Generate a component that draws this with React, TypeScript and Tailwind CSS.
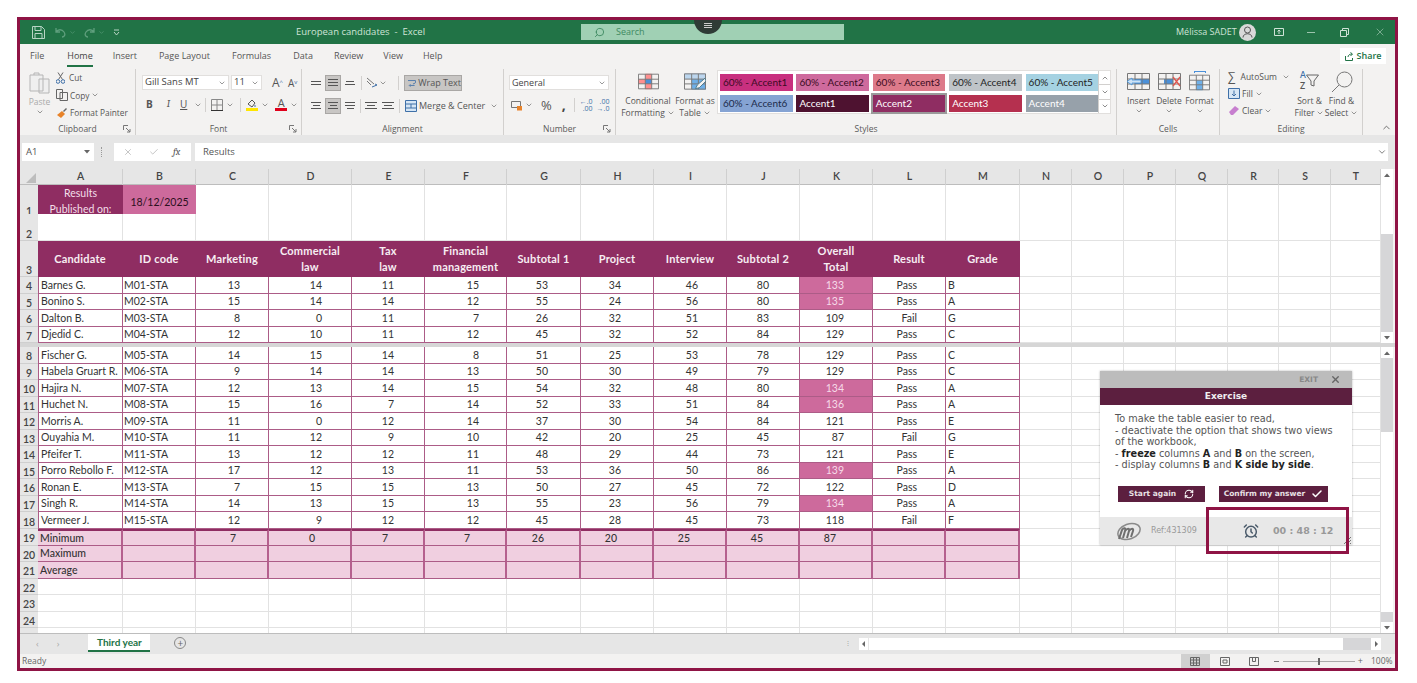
import { AlarmClock, Check, ChevronDown, ChevronUp, RefreshCw, Search, X } from 'lucide-react'
import type { ReactNode } from 'react'

const columns = ['A', 'B', 'C', 'D', 'E', 'F', 'G', 'H', 'I', 'J', 'K', 'L', 'M', 'N', 'O', 'P', 'Q', 'R', 'S', 'T']
const gridCols =
  'grid grid-cols-[18px_85px_73px_73px_83px_73px_82px_74px_73px_73px_73px_73px_73px_74px_52px_52px_52px_52px_51px_52px_50px]'

// right padding per score column, C to L
const scorePad = ['pr-[28px]', 'pr-[29px]', 'pr-[30px]', 'pr-[27px]', 'pr-[32px]', 'pr-[32px]', 'pr-[28px]', 'pr-[30px]', 'pr-[28px]', 'pr-[28px]']

const candidates: [string, string, number[], string, string][] = [
  ['Barnes G.', 'M01-STA', [13, 14, 11, 15, 53, 34, 46, 80, 133], 'Pass', 'B'],
  ['Bonino S.', 'M02-STA', [15, 14, 14, 12, 55, 24, 56, 80, 135], 'Pass', 'A'],
  ['Dalton B.', 'M03-STA', [8, 0, 11, 7, 26, 32, 51, 83, 109], 'Fail', 'G'],
  ['Djedid C.', 'M04-STA', [12, 10, 11, 12, 45, 32, 52, 84, 129], 'Pass', 'C'],
  ['Fischer G.', 'M05-STA', [14, 15, 14, 8, 51, 25, 53, 78, 129], 'Pass', 'C'],
  ['Habela Gruart R.', 'M06-STA', [9, 14, 14, 13, 50, 30, 49, 79, 129], 'Pass', 'C'],
  ['Hajira N.', 'M07-STA', [12, 13, 14, 15, 54, 32, 48, 80, 134], 'Pass', 'A'],
  ['Huchet N.', 'M08-STA', [15, 16, 7, 14, 52, 33, 51, 84, 136], 'Pass', 'A'],
  ['Morris A.', 'M09-STA', [11, 0, 12, 14, 37, 30, 54, 84, 121], 'Pass', 'E'],
  ['Ouyahia M.', 'M10-STA', [11, 12, 9, 10, 42, 20, 25, 45, 87], 'Fail', 'G'],
  ['Pfeifer T.', 'M11-STA', [13, 12, 12, 11, 48, 29, 44, 73, 121], 'Pass', 'E'],
  ['Porro Rebollo F.', 'M12-STA', [17, 12, 13, 11, 53, 36, 50, 86, 139], 'Pass', 'A'],
  ['Ronan E.', 'M13-STA', [7, 15, 15, 13, 50, 27, 45, 72, 122], 'Pass', 'D'],
  ['Singh R.', 'M14-STA', [14, 13, 15, 13, 55, 23, 56, 79, 134], 'Pass', 'A'],
  ['Vermeer J.', 'M15-STA', [12, 9, 12, 12, 45, 28, 45, 73, 118], 'Fail', 'F'],
]

const headers = ['Candidate', 'ID code', 'Marketing', 'Commercial\nlaw', 'Tax\nlaw', 'Financial\nmanagement', 'Subtotal 1', 'Project', 'Interview', 'Subtotal 2', 'Overall\nTotal', 'Result', 'Grade']
const minimums = [7, 0, 7, 7, 26, 20, 25, 45, 87]

const styleCells = [
  ['60% - Accent1', 'bg-[#c8307f] text-[#3a0b22]'],
  ['60% - Accent2', 'bg-[#ce6a9d] text-[#3a0b22]'],
  ['60% - Accent3', 'bg-[#dd7a8a] text-[#3a0b22]'],
  ['60% - Accent4', 'bg-[#bfc4c8] text-[#222]'],
  ['60% - Accent5', 'bg-[#a5d2e2] text-[#222]'],
  ['60% - Accent6', 'bg-[#85a3d3] text-[#1c2a4a]'],
  ['Accent1', 'bg-[#4e1230] text-white'],
  ['Accent2', 'bg-[#8f2d62] text-white outline-2 outline-[#9a9a9a]'],
  ['Accent3', 'bg-[#b5304f] text-white'],
  ['Accent4', 'bg-[#97a1aa] text-white'],
]

function Launcher() {
  return (
    <svg width="8" height="8" viewBox="0 0 8 8" className="absolute right-[4px] bottom-[2px]" fill="none" stroke="#777">
      <path d="M.5 5V.5H5M3 3l4 4M7 4v3H4" />
    </svg>
  )
}

function Group({ label, width, launcher, children }: { label: string; width: string; launcher?: boolean; children: ReactNode }) {
  return (
    <div className={`${width} relative flex flex-col border-r border-[#d2d0ce] h-[66px] mt-[1px]`}>
      <div className="flex-1 min-h-0">{children}</div>
      <div className="text-[8.500px] text-center text-[#5a5a5a] h-[13px] leading-[13px]">{label}</div>
      {launcher && <Launcher />}
    </div>
  )
}

function Lines({ widths, active }: { widths: number[]; active?: boolean }) {
  return (
    <div className={`w-[16px] h-[16px] flex flex-col justify-center items-center gap-[2px] ${active ? 'bg-[#c8c6c4] border border-[#a9a7a5]' : ''}`}>
      {widths.map((w, i) => (
        <div key={i} className="h-px bg-[#555]" style={{ width: w }} />
      ))}
    </div>
  )
}

function Caret() {
  return <ChevronDown size={8} strokeWidth={2} className="text-[#666]" />
}

function TableIcon({ fill, over, width = 23 }: { fill?: ReactNode; over?: ReactNode; width?: number }) {
  return (
    <svg width={width} height="17" viewBox="0 0 23 17" fill="none">
      {fill}
      <path d="M.5.5h22v16H.5zM.5 6h22M.5 11h22M8 .5v16M15 .5v16" stroke="#777" />
      {over}
    </svg>
  )
}

function BigButton({ icon, lines, width, caret }: { icon: ReactNode; lines: string[]; width: string; caret?: boolean }) {
  return (
    <div className={`${width} flex flex-col items-center text-[8.500px] leading-[12px] text-[#555]`}>
      <div className="h-[25px] flex items-start pt-[3px]">{icon}</div>
      {lines.map((l, i) => (
        <div key={l} className="flex items-center gap-[2px] whitespace-nowrap h-[12px]">
          {l}
          {caret && i === lines.length - 1 && <Caret />}
        </div>
      ))}
      {!caret && <Caret />}
    </div>
  )
}

function TitleBar() {
  return (
    <div className="h-[24px] bg-[#217346] flex items-center text-[#cfe3d7] relative shrink-0 text-[9px]">
      <svg width="13" height="13" viewBox="0 0 13 13" fill="none" stroke="#b9d5c5" className="ml-[12px]">
        <path d="M.5.5h9l3 3v9H.5zM3 .5v4h6v-4M3 12.5v-5h7v5" />
      </svg>
      <svg width="11" height="11" viewBox="0 0 11 11" fill="none" stroke="#5f9f7d" strokeWidth="1.3" className="ml-[10px]">
        <path d="M1 1v4h4M1 5c2-3 6-3 8 0s0 5-2 5" />
      </svg>
      <ChevronDown size={7} className="ml-[3px] text-[#5f9f7d]" />
      <svg width="11" height="11" viewBox="0 0 11 11" fill="none" stroke="#5f9f7d" strokeWidth="1.3" className="ml-[8px]">
        <path d="M10 1v4H6M10 5C8 2 4 2 2 5s0 5 2 5" />
      </svg>
      <ChevronDown size={7} className="ml-[3px] text-[#5f9f7d]" />
      <svg width="7" height="7" viewBox="0 0 7 7" fill="none" stroke="#b9d5c5" className="ml-[8px]">
        <path d="M1 1h5M1 3l2.500 3L6 3" />
      </svg>
      <div className="ml-[176px] w-[150px] text-[9.500px] whitespace-pre">European candidates  -  Excel</div>
      <div className="ml-[135px] w-[263px] h-[16px] bg-[#a0d0b4] flex items-center text-[#3f8a62] text-[9px]">
        <Search size={11} className="ml-[13px] -scale-x-100" />
        <span className="ml-[11px]">Search</span>
      </div>
      <div className="ml-[332px] w-[56px] whitespace-nowrap text-[9px]">Mélissa SADET</div>
      <div className="ml-[7px] w-[17px] h-[17px] rounded-full bg-[#d9d9d9] flex items-center justify-center">
        <svg width="11" height="12" viewBox="0 0 11 12" fill="none" stroke="#555">
          <circle cx="5.500" cy="4" r="3" />
          <path d="M1 11.500c0-5 9-5 9 0" />
        </svg>
      </div>
      <svg width="10" height="8" viewBox="0 0 10 8" fill="none" stroke="#cfe3d7" className="ml-[18px]">
        <path d="M.5.5h9v7h-9zM5 6V2M3.500 3.500 5 2l1.500 1.500" />
      </svg>
      <div className="ml-[23px] w-[8px] h-px bg-[#9cc4ad]" />
      <svg width="9" height="9" viewBox="0 0 9 9" fill="none" stroke="#cfe3d7" className="ml-[25px]">
        <path d="M.5 2.500h6v6h-6zM2.500 2.500v-2h6v6h-2" />
      </svg>
      <X size={12} strokeWidth={1} className="ml-[25px] text-[#cfe3d7]" />
    </div>
  )
}

function MenuTabs() {
  const tabs: [string, string][] = [
    ['File', 'ml-[10px]'],
    ['Home', 'ml-[23px]'],
    ['Insert', 'ml-[20px]'],
    ['Page Layout', 'ml-[22px]'],
    ['Formulas', 'ml-[22px]'],
    ['Data', 'ml-[22px]'],
    ['Review', 'ml-[21px]'],
    ['View', 'ml-[20px]'],
    ['Help', 'ml-[20px]'],
  ]
  return (
    <div className="h-[24px] bg-[#f3f2f1] flex items-center text-[9px] text-[#555] shrink-0">
      {tabs.map(([t, m]) =>
        t === 'Home' ? (
          <div key={t} className={`${m} text-[#444] relative font-medium`}>
            {t}
            <div className="absolute left-0 right-0 -bottom-[4px] h-[2px] bg-[#217346]" />
          </div>
        ) : (
          <div key={t} className={m}>
            {t}
          </div>
        ),
      )}
      <div className="ml-auto mr-[9px] w-[46px] h-[16px] bg-white flex items-center justify-center gap-[3px] text-[#217346] font-semibold">
        <svg width="9" height="9" viewBox="0 0 9 9" fill="none" stroke="#217346">
          <path d="M.5 4v4.500h7V6M3 5c0-2 2-3 4-3M5.500.5 7.500 2l-2 2" />
        </svg>
        Share
      </div>
    </div>
  )
}

function Ribbon() {
  return (
    <div className="h-[67px] bg-[#f3f2f1] flex shrink-0 text-[#555]">
      <Group label="Clipboard" width="w-[116px]" launcher>
        <div className="flex">
          <div className="w-[33px] ml-[3px] mt-[3px] flex flex-col items-center text-[8.500px] leading-[12px] text-[#aaa]">
            <svg width="21" height="22" viewBox="0 0 21 22" fill="none" stroke="#b5b5b5">
              <path d="M1 3h13v16H1zM5 3V1h5v2M10 7h10v14H10z" fill="#efefef" />
            </svg>
            <span className="mt-[2px]">Paste</span>
            <Caret />
          </div>
          <div className="mt-0 flex flex-col text-[8.300px] leading-[17.500px]">
            <div className="flex items-center gap-[4px]">
              <svg width="9" height="12" viewBox="0 0 9 12" fill="none" stroke="#3f70a8">
                <path d="M2 .5 6.500 7.500M7 .5 2.500 7.500" stroke="#666" />
                <circle cx="2" cy="9.500" r="1.800" />
                <circle cx="7" cy="9.500" r="1.800" />
              </svg>
              Cut
            </div>
            <div className="flex items-center gap-[2px]">
              <svg width="12" height="12" viewBox="0 0 12 12" fill="none" stroke="#666">
                <path d="M.5.500h6v9h-6zM4 3.500h7.500v8H4z" fill="#f3f2f1" />
              </svg>
              Copy
              <Caret />
            </div>
            <div className="flex items-center gap-[2px] whitespace-nowrap">
              <svg width="12" height="12" viewBox="0 0 12 12">
                <path d="M1 8l5-4 3 3-4 4z" fill="#e8832a" />
                <path d="M7 4l3-3 1 1-3 3z" fill="#666" />
              </svg>
              Format Painter
            </div>
          </div>
        </div>
      </Group>

      <Group label="Font" width="w-[166px]" launcher>
        <div className="pl-[6px] pt-[6px] flex flex-col">
          <div className="flex items-center gap-[2px]">
            <div className="w-[87px] h-[15px] bg-white border border-[#e1dfdd] flex items-center justify-between px-[2px] text-[9.500px] text-[#444] whitespace-nowrap">
              Gill Sans MT <Caret />
            </div>
            <div className="w-[31px] h-[15px] bg-white border border-[#e1dfdd] flex items-center justify-between px-[2px] text-[9.500px] text-[#444]">
              11 <Caret />
            </div>
            <div className="ml-[8px] text-[12px] text-[#555] leading-none">
              A<sup className="text-[6px] text-[#3f70a8]">^</sup>
            </div>
            <div className="ml-[3px] text-[10px] text-[#555] leading-none">
              A<sup className="text-[6px] text-[#3f70a8]">v</sup>
            </div>
          </div>
          <div className="flex items-center mt-[7px] h-[15px] text-[10px]">
            <span className="ml-[4px] font-bold">B</span>
            <span className="ml-[14px] italic font-serif">I</span>
            <span className="ml-[10px] underline">U</span>
            <span className="ml-[7px]"><Caret /></span>
            <div className="ml-[3px] w-px h-[14px] bg-[#d2d0ce]" />
            <svg width="12" height="12" viewBox="0 0 12 12" fill="none" stroke="#888" className="ml-[5px]">
              <path d="M.5.500h11v11H.500zM6 .5v11M.5 6h11" />
              <path d="M0 11.500h12" stroke="#333" />
            </svg>
            <span className="ml-[3px]"><Caret /></span>
            <div className="ml-[6px] w-px h-[14px] bg-[#d2d0ce]" />
            <div className="ml-[5px] w-[12px] flex flex-col items-center">
              <svg width="10" height="9" viewBox="0 0 10 9" fill="none" stroke="#555">
                <path d="M1 5l4-4 3 3-3 4z" />
                <path d="M8 6v2" stroke="#3f70a8" />
              </svg>
              <div className="w-[12px] h-[3px] bg-[#ffe600]" />
            </div>
            <span className="ml-[3px]"><Caret /></span>
            <div className="ml-[6px] w-[12px] flex flex-col items-center">
              <span className="text-[11px] leading-[10px] text-[#555]">A</span>
              <div className="w-[12px] h-[3px] bg-[#e0001b]" />
            </div>
            <span className="ml-[3px]"><Caret /></span>
          </div>
        </div>
      </Group>

      <Group label="Alignment" width="w-[202px]">
        <div className="pl-[6px] pt-[5px] flex flex-col gap-[6px]">
          <div className="flex items-center h-[17px]">
            <Lines widths={[10, 10]} />
            <div className="ml-[1px]"><Lines widths={[10, 10, 10]} active /></div>
            <div className="ml-[1px]"><Lines widths={[8, 10]} /></div>
            <div className="ml-[3px] w-px h-[14px] bg-[#d2d0ce]" />
            <svg width="12" height="12" viewBox="0 0 12 12" fill="none" stroke="#777" className="ml-[4px]">
              <path d="M1 1l7 6M1 4l4 4" />
              <path d="M6 10l5-2-2-1" stroke="#3f70a8" />
            </svg>
            <span className="ml-[1px]"><Caret /></span>
            <div className="ml-[11px] w-[1px] h-[14px] bg-[#d2d0ce]" />
            <div className="ml-[5px] w-[58px] h-[16px] bg-[#c8c6c4] border border-[#a9a7a5] flex items-center gap-[2px] pl-[3px] text-[9px] whitespace-nowrap">
              <svg width="10" height="10" viewBox="0 0 10 10" fill="none" stroke="#3f70a8">
                <path d="M0 2h9c1 3-1 4-3 4M8 8H2M3 6.500 1.500 8 3 9.500" />
              </svg>
              Wrap Text
            </div>
          </div>
          <div className="flex items-center h-[17px]">
            <Lines widths={[10, 7, 10]} />
            <div className="ml-[1px]"><Lines widths={[10, 7, 10]} active /></div>
            <div className="ml-[1px]"><Lines widths={[10, 10, 7]} /></div>
            <div className="ml-[2px] w-px h-[14px] bg-[#d2d0ce]" />
            <div className="ml-[2px]"><Lines widths={[12, 8, 12]} /></div>
            <div className="ml-[1px]"><Lines widths={[12, 8, 12]} /></div>
            <div className="ml-[3px] w-px h-[14px] bg-[#d2d0ce]" />
            <svg width="12" height="12" viewBox="0 0 12 12" fill="#d6e6f5" stroke="#3f70a8" className="ml-[5px]">
              <path d="M.5.500h11v11H.500zM.5 4h11M.5 8h11M6 4v4" />
            </svg>
            <div className="ml-[2px] flex items-center gap-[5px] text-[9px] whitespace-nowrap">
              Merge &amp; Center <Caret />
            </div>
          </div>
        </div>
      </Group>

      <Group label="Number" width="w-[112px]" launcher>
        <div className="pl-[5px] pt-[6px]">
          <div className="w-[100px] h-[15px] bg-white border border-[#e1dfdd] flex items-center justify-between px-[2px] text-[9px] text-[#444]">
            General <Caret />
          </div>
          <div className="flex items-center mt-[7px] h-[16px]">
            <svg width="12" height="11" viewBox="0 0 12 11" fill="none" stroke="#777" className="ml-[2px]">
              <path d="M.5 1.500h9v6h-9z" />
              <path d="M6 6h5v4.500H6z" fill="#e8832a" stroke="none" />
            </svg>
            <span className="ml-[2px]"><Caret /></span>
            <span className="ml-[8px] text-[13px] leading-none text-[#555]">%</span>
            <span className="ml-[10px] text-[14px] leading-none font-bold text-[#444]">,</span>
            <div className="ml-[8px] w-px h-[14px] bg-[#d2d0ce]" />
            <div className="ml-[5px] text-[7px] leading-[7px] text-[#3f70a8] text-right">←.0<br />.00</div>
            <div className="ml-[4px] text-[7px] leading-[7px] text-[#3f70a8] text-right">.00<br />→.0</div>
          </div>
        </div>
      </Group>

      <Group label="Styles" width="w-[501px]">
        <div className="flex h-full pt-[1px]">
          <BigButton
            width="w-[56px] ml-[4px]"
            caret
            lines={['Conditional', 'Formatting']}
            icon={
              <TableIcon
                width={21}
                fill={
                  <>
                    <path d="M8 0h7v17H8z" fill="#ff8f8f" />
                    <path d="M0 6h15v5H0z" fill="#ff8f8f" />
                    <path d="M8 6h7v5H8z" fill="#4a90d9" />
                  </>
                }
              />
            }
          />
          <BigButton
            width="w-[38px]"
            caret
            lines={['Format as', 'Table']}
            icon={
              <TableIcon
                width={22}
                fill={
                  <>
                    <path d="M0 0h23v6H0z" fill="#bcd6ee" />
                    <path d="M8 6h15v11H8z" fill="#6fb0e8" />
                  </>
                }
                over={<path d="M22 5 14 12l-2 4 4-1 7-7z" fill="#f3f2f1" stroke="#4d7a8c" />}
              />
            }
          />
          <div className="ml-[3px] w-[394px] h-[44px] bg-white border border-[#e1dfdd] flex">
            <div className="grid grid-cols-5 grid-rows-2 gap-x-[4px] gap-y-[3.500px] pl-[2px] pt-[2.500px] w-[380px]">
              {styleCells.map(([name, cls]) => (
                <div key={name} className={`${cls} h-[17px] w-[72.500px] flex items-center pl-[3px] text-[10px] whitespace-nowrap font-['Lato',sans-serif]`}>
                  {name}
                </div>
              ))}
            </div>
            <div className="ml-auto flex flex-col w-[12px] border-l border-[#d2d0ce]">
              <div className="flex-1 flex items-center justify-center border-b border-[#d2d0ce]"><ChevronUp size={8} /></div>
              <div className="flex-1 flex items-center justify-center border-b border-[#d2d0ce]"><ChevronDown size={8} /></div>
              <div className="flex-1 flex items-center justify-center"><ChevronDown size={8} /></div>
            </div>
          </div>
        </div>
      </Group>

      <Group label="Cells" width="w-[103px]">
        <div className="flex pl-[6px] pt-[1px]">
          <BigButton
            width="w-[31px]"
            lines={['Insert']}
            icon={
              <TableIcon
                fill={<path d="M8 6h15v5H8z" fill="#4a90d9" />}
                over={<path d="M0 8.500 5 5v2h9v3H5v2z" fill="#cfe3f5" stroke="#3f8fd9" strokeWidth=".8" />}
              />
            }
          />
          <BigButton
            width="w-[30px]"
            lines={['Delete']}
            icon={
              <TableIcon
                fill={<path d="M6 6h9v5H6z" fill="#4a90d9" />}
                over={<path d="M15 4l7 9M22 4l-7 9" stroke="#e0564f" strokeWidth="1.300" />}
              />
            }
          />
          <BigButton
            width="w-[31px]"
            lines={['Format']}
            icon={
              <div className="flex flex-col items-center -mt-[2px]">
                <div className="w-[12px] h-[2px] border-x border-t border-[#4a90d9] mb-[1px]" />
                <TableIcon width={21} fill={<path d="M8 6h7v11H8z" fill="#6fb0e8" />} />
              </div>
            }
          />
        </div>
      </Group>

      <Group label="Editing" width="w-[143px]">
        <div className="flex pl-[8px] pt-[1px]">
          <div className="w-[62px] -mt-[2px] flex flex-col text-[8.500px] leading-[17px] whitespace-nowrap">
            <div className="flex items-center">
              <span className="text-[12px] leading-none w-[14px]">∑</span>AutoSum <span className="ml-[5px]"><Caret /></span>
            </div>
            <div className="flex items-center gap-[2px]">
              <svg width="12" height="11" viewBox="0 0 12 11" fill="#d6e6f5" stroke="#3f70a8">
                <path d="M.5.500h11v10H.500zM6 2.500v5M4 6l2 2 2-2" />
              </svg>
              Fill <Caret />
            </div>
            <div className="flex items-center gap-[2px]">
              <svg width="12" height="11" viewBox="0 0 12 11">
                <path d="M1 7l6-6 4 3-6 6H3z" fill="#c77fcf" />
              </svg>
              Clear <Caret />
            </div>
          </div>
          <BigButton
            width="w-[33px] ml-[3px]"
            caret
            lines={['Sort &', 'Filter']}
            icon={
              <div className="flex items-center -mt-[3px] text-[8.500px] leading-[10.500px] font-semibold font-['Lato',sans-serif]">
                <div className="flex flex-col text-[#3f70a8]">A<span className="text-[#555]">Z</span></div>
                <svg width="13" height="13" viewBox="0 0 13 13" fill="none" stroke="#666">
                  <path d="M.5 1h12L8 7v5L5 11V7z" />
                </svg>
              </div>
            }
          />
          <BigButton
            width="w-[31px]"
            caret
            lines={['Find &', 'Select']}
            icon={
              <svg width="22" height="22" viewBox="0 0 22 22" fill="none" stroke="#777" className="-mt-[2px]">
                <circle cx="13.500" cy="8.500" r="7.500" />
                <path d="M8 14l-7 7" />
              </svg>
            }
          />
        </div>
      </Group>

      <div className="flex-1 flex items-end justify-end pr-[3px] pb-[2px]">
        <ChevronUp size={11} className="text-[#666]" />
      </div>
    </div>
  )
}

function FormulaBar() {
  return (
    <div className="h-[34px] bg-[#e6e6e6] flex shrink-0 pt-[8px] text-[9.500px] text-[#555]">
      <div className="ml-[2px] w-[72px] h-[18px] bg-white flex items-center px-[4px]">
        A1
        <svg width="6" height="4" viewBox="0 0 6 4" className="ml-auto"><path d="M0 0h6L3 3.500z" fill="#666" /></svg>
      </div>
      <div className="ml-[7px] w-[2px] h-[10px] mt-[4px] border-l border-dotted border-[#999]" />
      <div className="ml-[11px] w-[77px] h-[18px] bg-white flex items-center text-[#bbb]">
        <X size={10} className="ml-[9px]" />
        <Check size={10} className="ml-[16px]" />
        <span className="ml-[14px] italic font-serif text-[10px] text-[#555]">fx</span>
      </div>
      <div className="ml-[4px] w-[1193px] h-[18px] bg-white flex items-center pl-[8px] pr-[1px]">
        Results
        <ChevronDown size={10} className="ml-auto text-[#666]" />
      </div>
    </div>
  )
}

function RowNum({ n }: { n: number | string }) {
  return <div className="bg-[#e6e6e6] border-b border-[#cfcfcf] flex items-end justify-center text-[10.500px] font-semibold text-[#444] pb-[1px] leading-none">{n}</div>
}

function EmptyCells({ count, from = 0 }: { count: number; from?: number }) {
  return (
    <>
      {Array.from({ length: count }).map((_, i) => (
        <div key={i + from} className="border-r border-b border-[#e2e2e2] bg-white" />
      ))}
    </>
  )
}

function ColumnHeader() {
  return (
    <div className={`${gridCols} h-[16px] bg-[#e6e6e6] border-b border-[#bdbdbd]`}>
      <div className="flex items-end justify-end pr-[2px] pb-[2px]">
        <svg width="10" height="10" viewBox="0 0 10 10"><path d="M10 0v10H0z" fill="#bdbdbd" /></svg>
      </div>
      {columns.map((c) => (
        <div key={c} className="flex items-center justify-center pl-px border-r border-[#cfcfcf] text-[10.500px] font-semibold text-[#444]">
          {c}
        </div>
      ))}
    </div>
  )
}

function HeaderRow() {
  return (
    <div className={`${gridCols} h-[36px]`}>
      <RowNum n={3} />
      {headers.map((h) => (
        <div key={h} className="bg-[#8f2d62] text-[#f7edf2] font-bold text-[11px] tracking-[0.2px] leading-[16.500px] flex items-center justify-center text-center whitespace-pre-line border-r border-[#8f2d62]">
          {h}
        </div>
      ))}
      <EmptyCells count={7} />
    </div>
  )
}

function CandidateRow({ rowNo, data }: { rowNo: number; data: (typeof candidates)[number] }) {
  const [name, id, scores, result, grade] = data
  return (
    <div className={`${gridCols} h-[16.550px] text-[10.500px] text-[#333] leading-none`}>
      <RowNum n={rowNo} />
      <div className="border-l border-r border-b border-[#ac5c87] bg-white flex items-center pl-[2px] whitespace-nowrap overflow-hidden">{name}</div>
      <div className="border-r border-b border-[#ac5c87] bg-white flex items-center pl-[1px]">{id}</div>
      {scores.map((s, i) => {
        const high = i === 8 && s >= 133
        return (
          <div key={i} className={`border-r border-b border-[#ac5c87] flex items-center justify-end ${scorePad[i]} ${high ? 'bg-[#cd6a9c] text-[#f7dce9]' : 'bg-white'}`}>
            {s}
          </div>
        )
      })}
      <div className={`border-r border-b border-[#ac5c87] bg-white flex items-center justify-end ${scorePad[9]}`}>{result}</div>
      <div className="border-r border-b border-[#ac5c87] bg-white flex items-center pl-[2px]">{grade}</div>
      <EmptyCells count={7} />
    </div>
  )
}

function SummaryRow({ rowNo, label, values, first }: { rowNo: number; label: string; values?: number[]; first?: boolean }) {
  const edge = first ? 'border-t-2 border-t-[#8f2d62]' : ''
  return (
    <div className={`${gridCols} h-[16.550px] text-[10.500px] text-[#333] leading-none font-medium`}>
      <RowNum n={rowNo} />
      <div className={`bg-[#f0cfe0] border-r-2 border-r-[#b5608e] border-b border-b-[#ac5c87] ${edge} flex items-center pl-[2px]`}>{label}</div>
      <div className={`bg-[#f0cfe0] border-r-2 border-r-[#b5608e] border-b border-b-[#ac5c87] ${edge}`} />
      {Array.from({ length: 11 }).map((_, i) => (
        <div key={i} className={`bg-[#f0cfe0] border-r-2 border-r-[#b5608e] border-b border-b-[#ac5c87] ${edge} flex items-center justify-end ${i === 0 ? 'pr-[31px]' : 'pr-[35px]'}`}>
          {values?.[i]}
        </div>
      ))}
      <EmptyCells count={7} />
    </div>
  )
}

function BlankRow({ rowNo }: { rowNo: number | string }) {
  return (
    <div className={`${gridCols} h-[16.550px]`}>
      <RowNum n={rowNo} />
      <EmptyCells count={20} />
    </div>
  )
}

function ScrollBar({ height, before, thumb, after }: { height: string; before: string; thumb: string; after: string }) {
  return (
    <div className={`${height} w-[14px] pr-[2px] flex flex-col bg-[#f3f2f1]`}>
      <div className="h-[11px] bg-white flex items-center justify-center text-[#555]">
        <svg width="6" height="4" viewBox="0 0 6 4"><path d="M3 .5 6 4H0z" fill="#666" /></svg>
      </div>
      <div className={`${before} bg-[#d6d6d8]`} />
      <div className={`${thumb} bg-white`} />
      <div className={`${after} bg-[#d6d6d8]`} />
      <div className="h-[11px] bg-white flex items-center justify-center">
        <svg width="6" height="4" viewBox="0 0 6 4"><path d="M3 3.500 6 0H0z" fill="#666" /></svg>
      </div>
    </div>
  )
}

function Sheet() {
  return (
    <div className="flex h-[464px] shrink-0 bg-white text-[#333] font-['Lato',sans-serif]">
      <div className="w-[1361px] flex flex-col overflow-hidden">
        <div className="h-[174px] shrink-0 overflow-hidden">
          <ColumnHeader />
          <div className={`${gridCols} h-[29px]`}>
            <div className="bg-[#e6e6e6] border-b border-[#cfcfcf] flex items-end justify-center text-[10.500px] font-semibold text-[#444] pb-[3px] leading-none">1</div>
            <div className="bg-[#8f2d62] text-[#f3dfe9] text-[10.500px] leading-[16px] text-center flex items-center justify-center pb-[3px]">
              Results<br />Published on:
            </div>
            <div className="bg-[#cd6a9c] text-[#2c1020] text-[10.500px] flex items-center justify-center">18/12/2025</div>
            <EmptyCells count={18} />
          </div>
          <div className={`${gridCols} h-[27px]`}>
            <RowNum n={2} />
            <EmptyCells count={20} />
          </div>
          <HeaderRow />
          {candidates.slice(0, 4).map((c, i) => (
            <CandidateRow key={c[1]} rowNo={i + 4} data={c} />
          ))}
        </div>
        <div className="h-[4px] shrink-0 bg-[#d6d6d6]" />
        <div className="h-[286px] overflow-hidden">
          {candidates.slice(4).map((c, i) => (
            <CandidateRow key={c[1]} rowNo={i + 8} data={c} />
          ))}
          <SummaryRow rowNo={19} label="Minimum" values={minimums} first />
          <SummaryRow rowNo={20} label="Maximum" />
          <SummaryRow rowNo={21} label="Average" />
          <BlankRow rowNo={22} />
          <BlankRow rowNo={23} />
          <BlankRow rowNo={24} />
          <BlankRow rowNo="" />
        </div>
      </div>
      <div className="flex flex-col">
        <ScrollBar height="h-[174px]" before="h-0" thumb="h-[54px]" after="flex-1" />
        <div className="h-[4px] bg-[#d6d6d6]" />
        <ScrollBar height="h-[286px]" before="h-[74px]" thumb="h-[180px]" after="flex-1" />
      </div>
    </div>
  )
}

function SheetTabs() {
  return (
    <div className="h-[21px] bg-[#e6e6e6] border-t border-[#bdbdbd] flex items-start shrink-0 text-[#aaa] relative">
      <span className="ml-[16px] mt-[5px] text-[9px] leading-none">‹</span>
      <span className="ml-[18px] mt-[5px] text-[9px] leading-none">›</span>
      <div className="ml-[29px] w-[62px] h-[18px] bg-white border-b-2 border-[#217346] text-[#217346] font-bold text-[10px] flex items-center justify-center font-['Lato',sans-serif] whitespace-nowrap">
        Third year
      </div>
      <div className="ml-[24px] mt-[3px] w-[12px] h-[12px] rounded-full border border-[#888] flex items-center justify-center text-[#666] text-[10px] leading-none">+</div>
      <div className="ml-[659px] mt-[6px] text-[6px] leading-none tracking-tighter text-[#999]">⋮</div>
      <div className="ml-[8px] mt-[4px] w-[9px] h-[12px] bg-white flex items-center justify-center">
        <svg width="3" height="6" viewBox="0 0 3 6"><path d="M3 0v6L0 3z" fill="#666" /></svg>
      </div>
      <div className="ml-px mt-[4px] w-[474px] h-[12px] bg-white" />
      <div className="w-[28px] mt-[4px] h-[12px] bg-[#d6d6d8]" />
      <div className="mt-[4px] w-[10px] h-[12px] bg-white flex items-center justify-center">
        <svg width="3" height="6" viewBox="0 0 3 6"><path d="M0 0v6l3-3z" fill="#666" /></svg>
      </div>
    </div>
  )
}

function StatusBar() {
  return (
    <div className="h-[14px] bg-[#f3f2f1] flex items-center text-[8.500px] text-[#666] shrink-0">
      <span className="ml-[2px]">Ready</span>
      <div className="ml-auto w-[29px] h-[14px] bg-[#d0d0d0] flex items-center justify-center">
        <svg width="10" height="9" viewBox="0 0 10 9" fill="none" stroke="#666">
          <path d="M.5.500h9v8h-9zM.5 3h9M.5 6h9M3.500.5v8M6.500.5v8" />
        </svg>
      </div>
      <svg width="10" height="9" viewBox="0 0 10 9" fill="none" stroke="#666" className="ml-[10px]">
        <path d="M.5.500h9v8h-9zM3 3h4v3H3z" />
      </svg>
      <svg width="10" height="9" viewBox="0 0 10 9" fill="none" stroke="#666" className="ml-[19px]">
        <path d="M.5.500h9v8h-9zM3.500.5v4h3v-4" />
      </svg>
      <div className="ml-[15px] w-[5px] h-px bg-[#777]" />
      <div className="ml-[4px] w-[72px] h-px bg-[#aaa] relative">
        <div className="absolute left-[35px] -top-[3px] w-[2px] h-[7px] bg-[#666]" />
      </div>
      <span className="ml-[3px] text-[9px]">+</span>
      <span className="ml-[8px] mr-[4px] w-[20px]">100%</span>
    </div>
  )
}

function ExerciseDialog() {
  return (
    <div className="absolute left-[1080px] top-[351px] w-[252px] h-[174px] flex flex-col shadow-[0_0_2px_rgba(0,0,0,0.3)] font-['DejaVu_Sans',sans-serif]">
      <div className="h-[17px] bg-[#bcbcbc] flex items-center justify-end text-[7.500px] font-semibold text-[#888]">
        EXIT
        <X size={11} strokeWidth={3} className="ml-[12px] mr-[11px] text-[#666]" />
      </div>
      <div className="h-[17px] bg-[#5c1f3f] text-[#eee] text-[9px] font-bold flex items-center justify-center">Exercise</div>
      <div className="flex-1 bg-white pl-[15px] pt-[8px] text-[9.700px] leading-[11.500px] text-[#555] whitespace-nowrap">
        <div>To make the table easier to read,</div>
        <div>- deactivate the option that shows two views</div>
        <div>of the workbook,</div>
        <div>
          - <b className="text-[#222]">freeze</b> columns <b className="text-[#222]">A</b> and <b className="text-[#222]">B</b> on the screen,
        </div>
        <div>
          - display columns <b className="text-[#222]">B</b> and <b className="text-[#222]">K side by side</b>.
        </div>
        <div className="flex mt-[15px] ml-[3px] text-[7.500px] font-bold text-[#e8e0e4]">
          <div className="w-[87px] h-[16px] bg-[#5c1f3f] flex items-center justify-center gap-[8px]">
            Start again <RefreshCw size={10} strokeWidth={2.500} className="text-white" />
          </div>
          <div className="ml-[14px] w-[109px] h-[16px] bg-[#5c1f3f] flex items-center justify-center gap-[6px]">
            Confirm my answer <Check size={12} strokeWidth={3} className="text-white" />
          </div>
        </div>
      </div>
      <div className="h-[28px] bg-[#e8e8e8] flex items-center relative">
        <svg width="25" height="19" viewBox="0 0 25 19" fill="none" className="ml-[16px]">
          <ellipse cx="13" cy="9.500" rx="11.500" ry="7.500" stroke="#8a8a8a" strokeWidth="1.500" transform="rotate(-20 13 9.500)" />
          <path d="M3 17 6 8c2-3 4-2 3 1l-2 7M9 9c2-3 5-3 4 0l-2 7M13 9c2-3 5-3 4 0l-2 6" stroke="#6f6f6f" strokeWidth="2" />
        </svg>
        <span className="ml-[10px] text-[8px] text-[#999]">Ref:431309</span>
        <AlarmClock size={16} strokeWidth={2.200} className="ml-[46px] text-[#4a5a6a]" />
        <span className="ml-[14px] text-[9.500px] font-bold text-[#999] whitespace-nowrap">00 : 48 : 12</span>
        <svg width="10" height="10" viewBox="0 0 10 10" className="absolute right-0 bottom-0" stroke="#777">
          <path d="M2 9l7-7M5 9l4-4M8 9l1-1" />
        </svg>
      </div>
    </div>
  )
}

export default function App() {
  return (
    <div className="w-[1417px] h-[683px] bg-white pt-[17px] pl-[17px] overflow-hidden font-['Open_Sans',sans-serif]">
      <div className="w-[1381px] h-[654px] border-[3px] border-[#8f1445] flex flex-col relative overflow-hidden">
        <TitleBar />
        <MenuTabs />
        <Ribbon />
        <FormulaBar />
        <Sheet />
        <SheetTabs />
        <StatusBar />
        {/* dialog and overlays on top of the sheet */}
        <ExerciseDialog />
        <div className="absolute left-[1186px] top-[487px] w-[143px] h-[47px] border-[3px] border-[#8f1445]" />
        <div className="absolute left-[674px] -top-[10px] w-[28px] h-[24px] rounded-b-full bg-[#2f3b36] flex items-end justify-center pb-[6px]">
          <div className="w-[8px] h-[5px] border-y border-[#ccc] flex items-center"><div className="w-full h-px bg-[#ccc]" /></div>
        </div>
      </div>
    </div>
  )
}
